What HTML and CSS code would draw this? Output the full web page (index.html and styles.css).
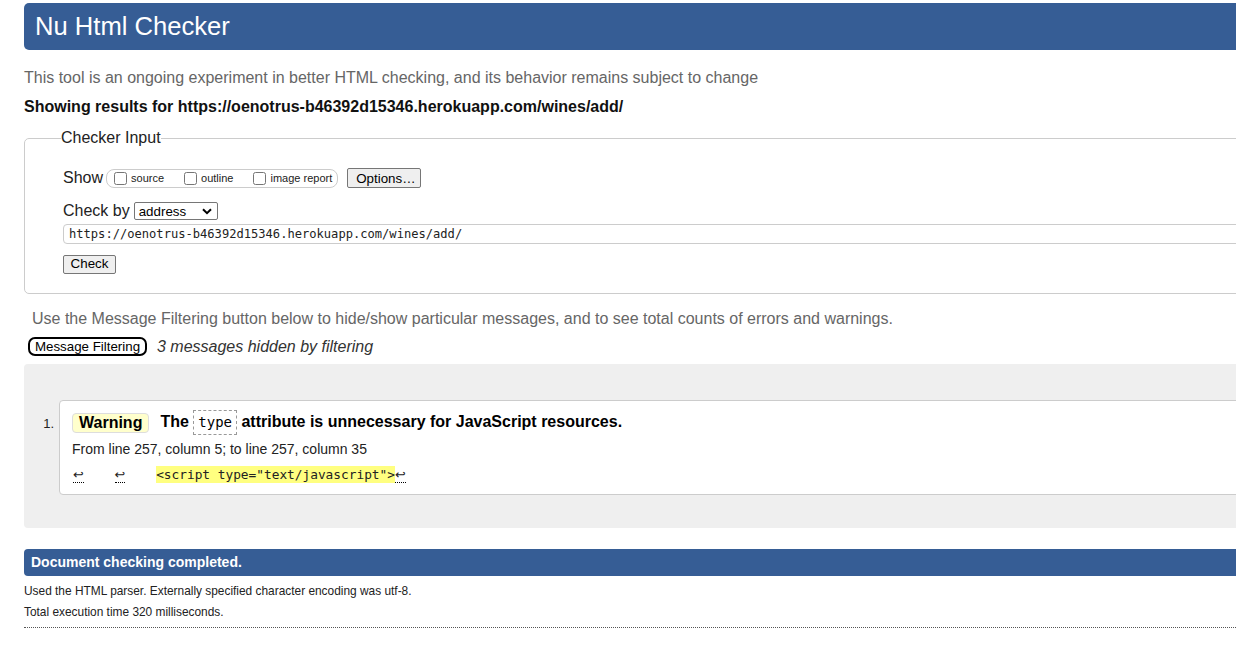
FILE: index.html
```html
<!DOCTYPE html>
<html lang="en">
<head>
<meta charset="utf-8">
<title>Showing results for https://oenotrus-b46392d15346.herokuapp.com/wines/add/ - Nu Html Checker</title>
<link rel="stylesheet" href="styles.css">
</head>
<body>
<div class="page">
  <h1 class="title">Nu Html Checker</h1>
  <p class="intro">This tool is an ongoing experiment in better HTML checking, and its behavior remains subject to change</p>
  <p class="showing">Showing results for https://oenotrus-b46392d15346.herokuapp.com/wines/add/</p>

  <fieldset class="input-box">
    <legend class="legend">Checker Input</legend>
    <div class="row row-show">
      <span class="row-label">Show</span>
      <span class="show-group">
        <label class="opt"><input type="checkbox" class="cb"><span>source</span></label>
        <label class="opt"><input type="checkbox" class="cb"><span>outline</span></label>
        <label class="opt"><input type="checkbox" class="cb"><span>image report</span></label>
      </span>
      <button class="btn btn-options" type="button">Options…</button>
    </div>
    <div class="row row-checkby">
      <span class="row-label">Check by</span>
      <span class="select">
        <span class="select-text">address</span>
        <svg class="chev" width="10" height="7" viewBox="0 0 10 7"><path d="M1 1.2 L5 5.2 L9 1.2" fill="none" stroke="#000" stroke-width="2"/></svg>
      </span>
    </div>
    <div class="url-input">https://oenotrus-b46392d15346.herokuapp.com/wines/add/</div>
    <div class="row-check"><button class="btn btn-check" type="button">Check</button></div>
  </fieldset>

  <p class="filter-note">Use the Message Filtering button below to hide/show particular messages, and to see total counts of errors and warnings.</p>
  <div class="filter-row">
    <button class="btn-filter" type="button">Message Filtering</button>
    <span class="hidden-count">3 messages hidden by filtering</span>
  </div>

  <div class="results">
    <div class="msg-row">
      <span class="msg-num">1.</span>
      <div class="msg">
        <p class="msg-title"><strong class="badge">Warning</strong><span class="msg-text">The <code class="attr">type</code> attribute is unnecessary for JavaScript resources.</span></p>
        <p class="location">From line 257, column 5; to line 257, column 35</p>
        <p class="extract"><b class="lf">↩</b>    <b class="lf">↩</b>    <mark class="hl">&lt;script type="text/javascript"&gt;</mark><b class="lf">↩</b></p>
      </div>
    </div>
  </div>

  <h2 class="done">Document checking completed.</h2>
  <p class="meta">Used the HTML parser. Externally specified character encoding was utf-8.</p>
  <p class="meta">Total execution time 320 milliseconds.</p>
  <div class="rule"></div>
</div>
</body>
</html>
```
FILE: styles.css
```css
html, body {
  margin: 0;
  padding: 0;
  overflow: hidden;
  background: #fff;
}
body {
  font-family: "Liberation Sans", Arial, sans-serif;
  color: #000;
}
.page {
  margin-left: 24px;
  width: 1320px;
}
.title {
  margin: 3px 0 0 0;
  height: 47px;
  line-height: 46px;
  background: #365d95;
  color: #fff;
  font-size: 25.6px;
  font-weight: normal;
  padding-left: 11px;
  border-radius: 5px;
}
.intro {
  margin: 19px 0 0 0;
  font-size: 16px;
  line-height: 18px;
  color: #666;
}
.showing {
  margin: 11px 0 0 0;
  font-size: 16px;
  line-height: 18px;
  font-weight: bold;
  color: #111;
}
.input-box {
  margin: 13px 0 0 0;
  padding: 0 0 20px 38px;
  border: 1px solid #ccc;
  border-radius: 5px;
  min-inline-size: 0;
}
.legend {
  padding: 0;
  margin-left: -2px;
  font-size: 16px;
  line-height: 18px;
  color: #222;
}
.row {
  display: flex;
  align-items: center;
  height: 20px;
}
.row-show {
  margin-top: 21px;
}
.row-label {
  font-size: 16px;
  color: #222;
}
.show-group {
  display: flex;
  align-items: center;
  height: 17px;
  margin-left: 3px;
  padding: 0 5px 0 6px;
  border: 1px solid #ccc;
  border-radius: 8px;
}
.opt {
  display: flex;
  align-items: center;
  font-size: 11px;
  color: #222;
  margin-right: 19px;
}
.opt:last-child {
  margin-right: 0;
}
.cb {
  width: 13px;
  height: 13px;
  margin: 0 4px 0 1px;
}
.btn {
  font-family: "Liberation Sans", Arial, sans-serif;
  font-size: 13.33px;
  color: #000;
  background: #efefef;
  border: 1px solid #767676;
  border-radius: 2px;
  height: 20px;
  padding: 0 8px;
  line-height: 17px;
}
.btn-options {
  margin-left: 9px;
  width: 74px;
}
.row-checkby {
  margin-top: 13px;
}
.select {
  display: flex;
  align-items: center;
  justify-content: space-between;
  margin-left: 4px;
  width: 84px;
  height: 18px;
  box-sizing: border-box;
  border: 1px solid #767676;
  border-radius: 2px;
  padding: 0 5px 0 4px;
  font-size: 13.33px;
  color: #000;
}
.url-input {
  margin-top: 3px;
  height: 20px;
  box-sizing: border-box;
  border: 1px solid #ccc;
  border-radius: 4px;
  padding-left: 5px;
  font-family: "DejaVu Sans Mono", "Liberation Mono", monospace;
  font-size: 12.1px;
  line-height: 18px;
  color: #222;
}
.row-check {
  margin-top: 10px;
  height: 19px;
}
.btn-check {
  height: 19px;
  width: 53px;
  padding: 0;
  line-height: 16px;
}
.filter-note {
  margin: 16px 0 0 8px;
  font-size: 16px;
  line-height: 18px;
  color: #666;
}
.filter-row {
  display: flex;
  align-items: center;
  margin-top: 9px;
  margin-left: 4px;
  height: 19px;
}
.btn-filter {
  font-family: "Liberation Sans", Arial, sans-serif;
  font-size: 13.33px;
  color: #000;
  background: #fff;
  border: 2px solid #000;
  border-radius: 7px;
  height: 19px;
  width: 119px;
  padding: 0;
  line-height: 14px;
}
.hidden-count {
  margin-left: 10px;
  font-size: 16px;
  font-style: italic;
  color: #333;
}
.results {
  margin-top: 8px;
  background: #efefef;
  border-radius: 4px;
  padding: 36px 0 33px 0;
}
.msg-row {
  display: grid;
  grid-template-columns: 35px 1fr;
}
.msg-num {
  font-size: 13px;
  color: #222;
  text-align: right;
  padding-right: 5px;
  padding-top: 16px;
}
.msg {
  background: #fff;
  border: 1px solid #ccc;
  border-radius: 4px;
  padding: 9px 12px 10px 12px;
}
.msg-title {
  margin: 0;
  display: flex;
  align-items: center;
  height: 25px;
}
.badge {
  display: inline-block;
  height: 20px;
  box-sizing: border-box;
  line-height: 18px;
  padding: 0 6px;
  background: #ffffcc;
  border: 1px solid #ddd;
  border-radius: 4px;
  font-size: 16px;
  font-weight: bold;
}
.msg-text {
  margin-left: 11px;
  font-size: 16px;
  font-weight: bold;
}
.attr {
  display: inline-block;
  font-family: "DejaVu Sans Mono", "Liberation Mono", monospace;
  font-size: 14px;
  font-weight: normal;
  line-height: 23px;
  padding: 0 4px;
  border: 1px dashed #999;
  vertical-align: middle;
}
.location {
  margin: 6px 0 0 0;
  font-size: 14px;
  line-height: 16px;
  color: #222;
}
.extract {
  margin: 9px 0 0 1px;
  white-space: pre;
  font-family: "DejaVu Sans Mono", "Liberation Mono", monospace;
  font-size: 12.8px;
  line-height: 18px;
  color: #222;
}
.lf {
  font-family: "DejaVu Sans", sans-serif;
  font-weight: normal;
  border-bottom: 1px dotted #000;
}
.hl {
  background: #ffff80;
  color: #222;
  padding: 1px 0;
}
.done {
  margin: 21px 0 0 0;
  height: 27px;
  line-height: 27px;
  background: #365d95;
  color: #fff;
  font-size: 14px;
  font-weight: bold;
  padding-left: 7px;
  border-radius: 4px;
}
.meta {
  margin: 8px 0 0 0;
  font-size: 11.9px;
  line-height: 14px;
  color: #222;
}
.meta + .meta {
  margin-top: 7px;
}
.rule {
  margin-top: 8px;
  border-top: 1px dotted #555;
}
```
